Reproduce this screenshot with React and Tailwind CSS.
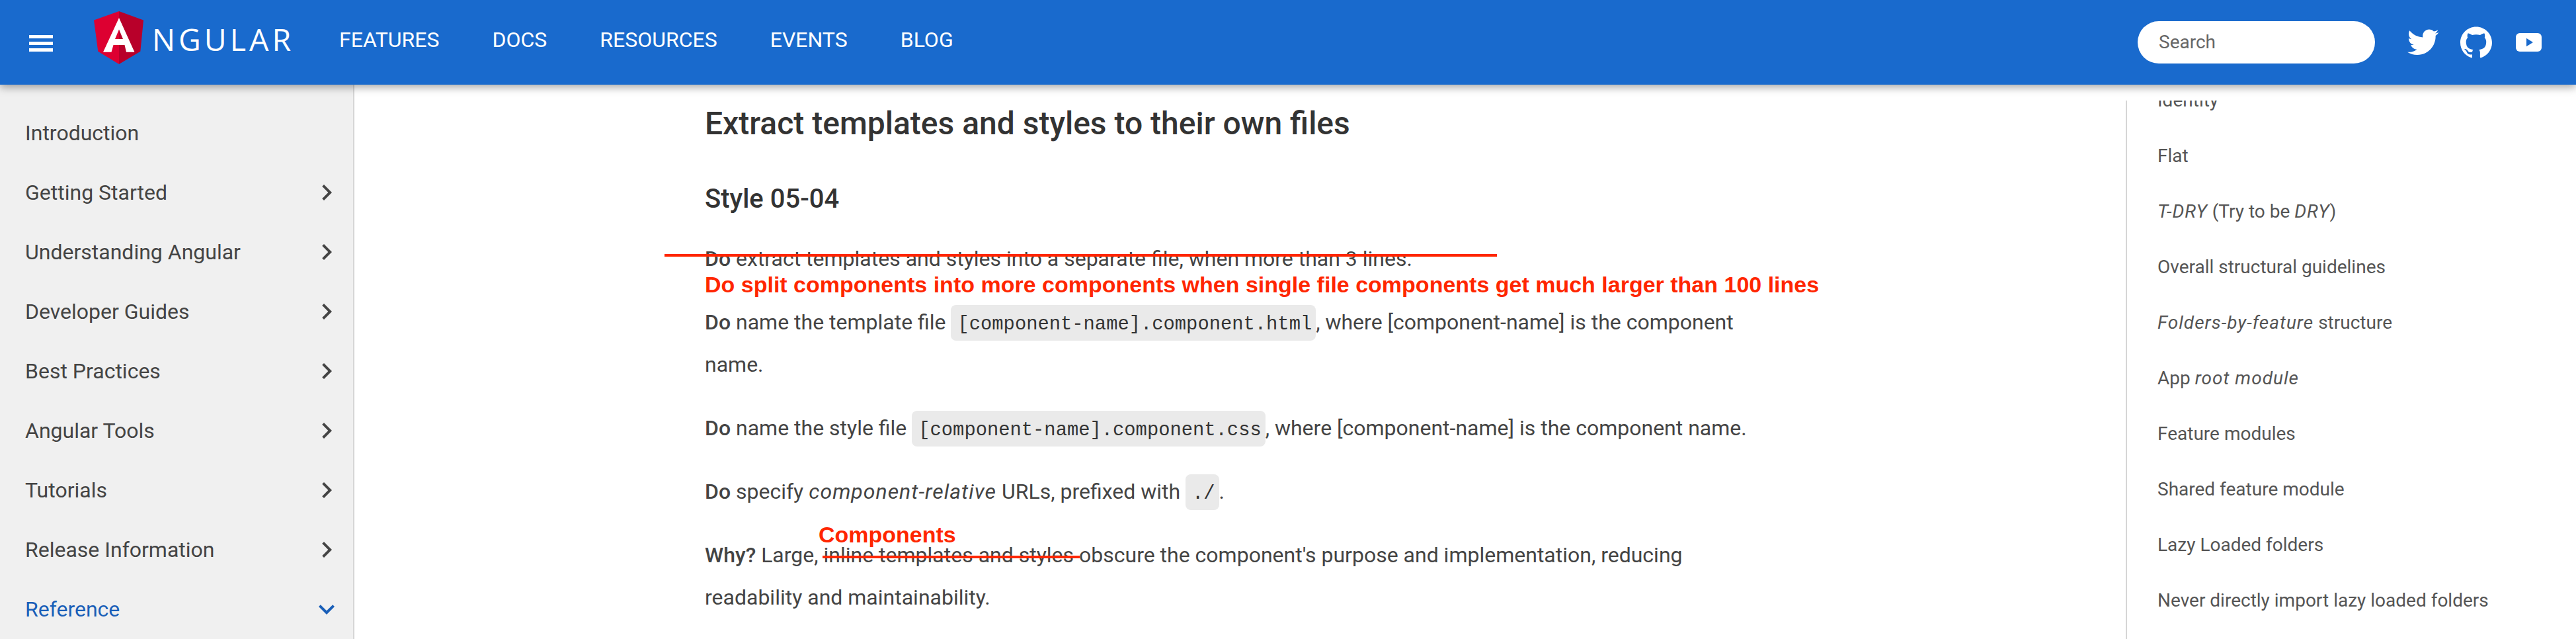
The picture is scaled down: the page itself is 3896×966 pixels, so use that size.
import { MdChevronRight, MdExpandMore } from 'react-icons/md';
import { FaTwitter } from 'react-icons/fa';
import { SiGithub } from 'react-icons/si';

const navItems = [
  { label: 'Introduction' },
  { label: 'Getting Started', more: true },
  { label: 'Understanding Angular', more: true },
  { label: 'Developer Guides', more: true },
  { label: 'Best Practices', more: true },
  { label: 'Angular Tools', more: true },
  { label: 'Tutorials', more: true },
  { label: 'Release Information', more: true },
  { label: 'Reference', open: true },
];

const topLinks = ['FEATURES', 'DOCS', 'RESOURCES', 'EVENTS', 'BLOG'];

function Code({ children }) {
  return (
    <code className="inline-block h-[54px] pl-[10px] pr-[6px] rounded-lg bg-[#eaeaea] font-['Liberation_Mono',monospace] text-[28.8px] leading-[60px] text-[#333]">
      {children}
    </code>
  );
}

function AngularLogo() {
  return (
    <svg width="75" height="80" viewBox="0 0 75 80" className="shrink-0">
      <polygon points="38,0 0,13.4 6.3,60.7 38,80" fill="#dd0031" />
      <polygon points="38,0 75,13.4 70.3,60.7 38,80" fill="#b8002a" />
      <path
        fillRule="evenodd"
        fill="#fff"
        d="M38 10 L61.5 61.7 L49 61.7 L46.5 51 L29.5 51 L26.5 61.7 L14 61.7 Z M38 27.5 L32 42 L44 42 Z"
      />
    </svg>
  );
}

function Header() {
  return (
    <header className="relative z-10 flex h-[128px] shrink-0 bg-[#196acd] text-white shadow-[0_4px_12px_rgba(0,0,0,0.35)]">
      <div className="flex flex-col gap-[5px] ml-[44px] mt-[53px] w-[36px]">
        <span className="block h-[5px] bg-white" />
        <span className="block h-[5px] bg-white" />
        <span className="block h-[5px] bg-white" />
      </div>
      <div className="flex w-[300px] ml-[62px] mt-[17px]">
        <AngularLogo />
        <span className="ml-[13px] mt-[10px] h-[64px] font-['Open_Sans',sans-serif] text-[46.5px] leading-[64px] font-normal tracking-[5px]">NGULAR</span>
      </div>
      <nav className="flex gap-[80px] ml-[71px] mt-[38px] h-[44px] text-[32px] leading-[44px]">
        {topLinks.map(link => (
          <span key={link}>{link}</span>
        ))}
      </nav>
      <div className="flex items-start ml-auto mt-[32px]">
        <div className="flex items-center w-[359px] h-[64px] pl-[32px] rounded-full bg-white text-[28px] text-[#666]">
          Search
        </div>
        <div className="flex items-center h-[64px] ml-[49px] mr-[52px]">
          <FaTwitter className="w-[47.5px] h-[47.5px]" />
          <SiGithub className="ml-[32.5px] w-[48px] h-[48px]" />
          <svg width="39" height="28" viewBox="0 0 39 28" className="ml-[36px]">
            <rect width="39" height="28" rx="6" fill="#fff" />
            <polygon points="16,7.7 26,14 16,20.3" fill="#196acd" />
          </svg>
        </div>
      </div>
    </header>
  );
}

function Sidebar() {
  return (
    <aside className="w-[536px] shrink-0 pt-[28px] bg-[#f0f0f0] border-r-2 border-[#d6d6d6] text-[32px]">
      {navItems.map(item => (
        <div
          key={item.label}
          className={`flex items-center justify-between h-[90px] pl-[38px] pr-[16px] ${item.open ? 'text-[#1a5fb8]' : 'text-[#444]'}`}
        >
          <span>{item.label}</span>
          {item.more && <MdChevronRight size={48} />}
          {item.open && <MdExpandMore size={48} />}
        </div>
      ))}
    </aside>
  );
}

function Content() {
  return (
    <main className="flex-1 min-w-0 pt-[27px] pl-[530px] text-[32px] leading-[64px] text-[#444]">
      <div className="w-[1590px]">
        <h3 className="mb-[54px] text-[48px] leading-[64px] font-medium text-[#333]">Extract templates and styles to their own files</h3>
        <h4 className="mb-[30px] text-[40px] leading-[56px] font-medium text-[#333]">Style 05-04</h4>

        <p className="relative mb-[32px]">
          <strong className="font-medium">Do</strong> extract templates and styles into a separate file, when more than 3 lines.
          <span className="absolute left-[-61px] top-[25px] w-[1259px] h-[4px] bg-[#ff2600]" />
          <span className="absolute left-0 top-[51px] whitespace-nowrap font-['Liberation_Sans',sans-serif] font-bold text-[34px] leading-[40px] text-[#ff2600]">
            Do split components into more components when single file components get much larger than 100 lines
          </span>
        </p>

        <p className="mb-[32px]">
          <strong className="font-medium">Do</strong> name the template file <Code>[component-name].component.html</Code>, where [component-name] is the component name.
        </p>

        <p className="mb-[32px]">
          <strong className="font-medium">Do</strong> name the style file <Code>[component-name].component.css</Code>, where [component-name] is the component name.
        </p>

        <p className="mb-[32px]">
          <strong className="font-medium">Do</strong> specify <em className="tracking-[1px]">component-relative</em> URLs, prefixed with <Code>./</Code>.
        </p>

        <p className="relative">
          <strong className="font-medium">Why?</strong> Large, inline templates and styles obscure the component's purpose and implementation, reducing readability and maintainability.
          <span className="absolute left-[178px] top-[33px] w-[389px] h-[4px] bg-[#ff2600]" />
          <span className="absolute left-[172px] top-[-19px] font-['Liberation_Sans',sans-serif] font-bold text-[34px] leading-[40px] text-[#ff2600]">
            Components
          </span>
        </p>
      </div>
    </main>
  );
}

function Toc() {
  const rows = [
    'Identity',
    'Flat',
    <><em className="tracking-[1px]">T-DRY</em> (Try to be <em className="tracking-[1px]">DRY</em>)</>,
    'Overall structural guidelines',
    <><em className="tracking-[1px]">Folders-by-feature</em> structure</>,
    <>App <em className="tracking-[1px]">root module</em></>,
    'Feature modules',
    'Shared feature module',
    'Lazy Loaded folders',
    'Never directly import lazy loaded folders',
  ];
  return (
    <div className="w-[681px] shrink-0 pt-[24px]">
      <div className="h-full overflow-hidden border-l-2 border-[#d6d6d6] pl-[46px] text-[28px] text-[#555]">
        <ul className="mt-[-42px]">
          {rows.map((row, i) => (
            <li key={i} className="flex items-center h-[84px] whitespace-pre">
              <span>{row}</span>
            </li>
          ))}
        </ul>
      </div>
    </div>
  );
}

export default function App() {
  return (
    <div className="flex flex-col h-[966px] overflow-hidden bg-white font-['Roboto',sans-serif]">
      <Header />
      <div className="flex flex-1 min-h-0">
        <Sidebar />
        <Content />
        <Toc />
      </div>
    </div>
  );
}
